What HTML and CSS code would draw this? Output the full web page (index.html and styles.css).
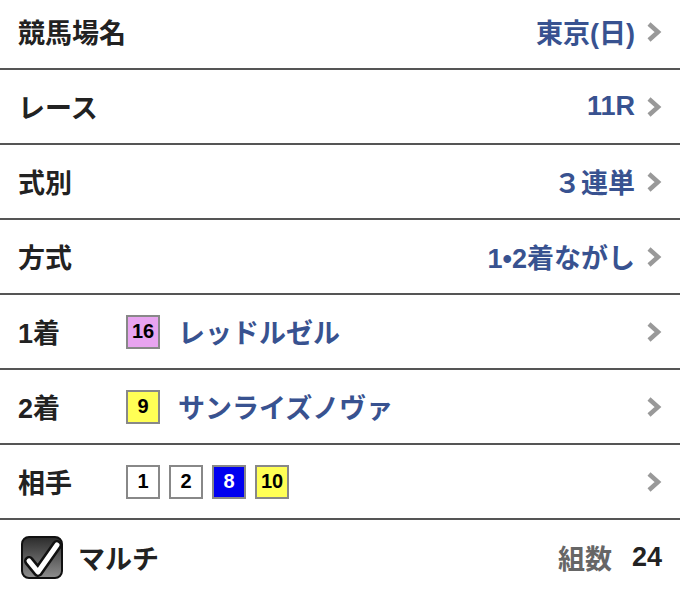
FILE: index.html
```html
<!DOCTYPE html>
<html lang="ja">

<head>
  <meta charset="UTF-8">
  <title>馬券購入 - 3連単</title>
  <meta name="viewport" content="width=device-width, initial-scale=1">
  <link rel="stylesheet" href="styles.css">
</head>

<body>

  <!-- Bet settings list -->
  <main class="bet-list">
    <div class="row">
      <span class="label">競馬場名</span>
      <span class="value">東京(日)</span>
      <svg class="chevron" viewBox="0 0 16 22"><polyline points="3,3 12,11 3,19"/></svg>
    </div>
    <div class="row">
      <span class="label">レース</span>
      <span class="value">11R</span>
      <svg class="chevron" viewBox="0 0 16 22"><polyline points="3,3 12,11 3,19"/></svg>
    </div>
    <div class="row">
      <span class="label">式別</span>
      <span class="value">３連単</span>
      <svg class="chevron" viewBox="0 0 16 22"><polyline points="3,3 12,11 3,19"/></svg>
    </div>
    <div class="row">
      <span class="label">方式</span>
      <span class="value">1•2着ながし</span>
      <svg class="chevron" viewBox="0 0 16 22"><polyline points="3,3 12,11 3,19"/></svg>
    </div>
    <div class="row">
      <span class="label">1着</span>
      <div class="horses">
        <span class="num waku-8">16</span>
        <span class="name">レッドルゼル</span>
      </div>
      <svg class="chevron" viewBox="0 0 16 22"><polyline points="3,3 12,11 3,19"/></svg>
    </div>
    <div class="row">
      <span class="label">2着</span>
      <div class="horses">
        <span class="num waku-5">9</span>
        <span class="name">サンライズノヴァ</span>
      </div>
      <svg class="chevron" viewBox="0 0 16 22"><polyline points="3,3 12,11 3,19"/></svg>
    </div>
    <div class="row">
      <span class="label">相手</span>
      <div class="horses tight">
        <span class="num waku-1">1</span>
        <span class="num waku-1">2</span>
        <span class="num waku-4">8</span>
        <span class="num waku-5">10</span>
      </div>
      <svg class="chevron" viewBox="0 0 16 22"><polyline points="3,3 12,11 3,19"/></svg>
    </div>

    <!-- Multi toggle and combination count -->
    <div class="row last">
      <label class="multi">
        <svg class="checkbox" viewBox="0 0 42 43">
          <defs>
            <linearGradient id="boxFill" x1="0" y1="0" x2="0" y2="1">
              <stop offset="0" stop-color="#2b2b2b"/>
              <stop offset="1" stop-color="#8e8e8e"/>
            </linearGradient>
          </defs>
          <rect x="1" y="1" width="40" height="41" rx="7" fill="url(#boxFill)" stroke="#111" stroke-width="2"/>
          <polyline points="8,25 17,36 36,9" fill="none" stroke="#111" stroke-width="10" stroke-linejoin="round" stroke-linecap="round"/>
          <polyline points="8,25 17,36 36,9" fill="none" stroke="#fff" stroke-width="5" stroke-linejoin="round" stroke-linecap="round"/>
        </svg>
        <span class="label">マルチ</span>
      </label>
      <div class="count">
        <span class="count-label">組数</span>
        <span class="count-value">24</span>
      </div>
    </div>
  </main>

</body>

</html>
```

FILE: styles.css
```css
/* Basic Reset */
* {
  margin: 0;
  padding: 0;
  box-sizing: border-box;
}

body {
  font-family: "Liberation Sans", "Noto Sans CJK JP", sans-serif;
  font-weight: bold;
  background-color: white;
  color: #222;
  overflow: hidden;
}

/* List */
.bet-list {
  display: flex;
  flex-direction: column;
  margin-top: -5px;
}

.row {
  display: flex;
  align-items: center;
  height: 75px;
  padding: 0 18px;
  border-bottom: 2px solid #555;
}

.row.last {
  border-bottom: none;
  justify-content: space-between;
  padding-left: 21px;
}

.label {
  font-size: 27px;
  width: 108px;
  flex-shrink: 0;
}

.value {
  margin-left: auto;
  font-size: 27px;
  color: #385290;
}

.chevron {
  width: 16px;
  height: 22px;
  margin-left: 11px;
  flex-shrink: 0;
}

.chevron polyline {
  fill: none;
  stroke: #999;
  stroke-width: 4.5;
}

/* Horse numbers */
.horses {
  display: flex;
  align-items: center;
  gap: 18px;
  flex: 1;
}

.horses.tight {
  gap: 9px;
}

.num {
  width: 34px;
  height: 34px;
  border: 2px solid #888;
  display: flex;
  align-items: center;
  justify-content: center;
  font-size: 20px;
  color: #000;
}

.waku-1 {
  background-color: white;
}

.waku-4 {
  background-color: #0000f0;
  color: white;
}

.waku-5 {
  background-color: #ffff55;
}

.waku-8 {
  background-color: #e8a4f0;
}

.name {
  font-size: 27px;
  color: #385290;
}

/* Multi row */
.multi {
  display: flex;
  align-items: center;
  gap: 15px;
}

.checkbox {
  width: 42px;
  height: 43px;
}

.multi .label {
  width: auto;
}

.count {
  display: flex;
  align-items: center;
  gap: 20px;
  font-size: 27px;
}

.count-label {
  color: #666;
}

.count-value {
  color: #222;
}
```
